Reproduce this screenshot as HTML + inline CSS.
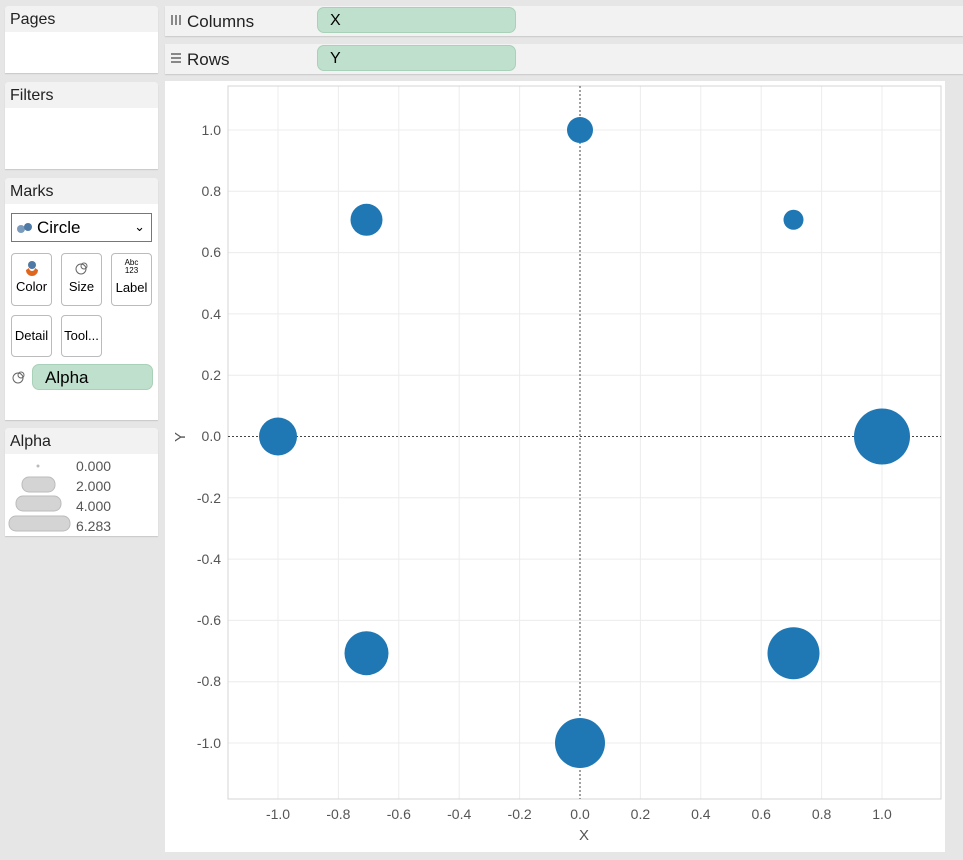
<!DOCTYPE html>
<html><head><meta charset="utf-8"><style>
body{margin:0;width:963px;height:860px;background:#e6e6e6;font-family:"Liberation Sans",sans-serif;position:relative;overflow:hidden}
.card{position:absolute;left:5px;width:153px;background:#fff;border-radius:4px 4px 0 0;box-shadow:0 1px 1px #c8c8c8}
.card .h{background:#f2f2f2;height:26px;font-size:16px;line-height:28px;padding-left:5px;color:#222;border-radius:4px 4px 0 0}
.shelf{position:absolute;left:165px;width:798px;height:30px;background:#f2f2f2;box-shadow:0 1px 1px #c8c8c8}
.shelf span{position:absolute;left:22px;top:6px;font-size:17px;color:#222}
.pill{position:absolute;left:152px;top:1px;width:199px;height:26px;background:#bfe0cc;border:1px solid #a9d0b8;border-radius:7px;font-size:16px;line-height:26px;padding-left:12px;box-sizing:border-box}
.btn{position:absolute;width:41px;height:53px;border:1px solid #bbb;border-radius:4px;font-size:13px;text-align:center;box-sizing:border-box;background:#fff}
</style></head><body>
<div class="card" style="top:6px;height:67px"><div class="h">Pages</div></div>
<div class="card" style="top:82px;height:87px"><div class="h">Filters</div></div>
<div class="card" style="top:178px;height:242px"><div class="h">Marks</div>
<div style="position:absolute;left:6px;top:35px;width:141px;height:29px;border:1px solid #777;box-sizing:border-box;font-size:17px;line-height:27px;padding-left:25px">Circle
<svg style="position:absolute;left:4px;top:8px" width="18" height="12"><circle cx="5" cy="7" r="4" fill="#7b9bbd"/><circle cx="12" cy="5" r="4" fill="#4f7aa5"/></svg>
<span style="position:absolute;right:6px;top:-1px;font-size:13px">&#8964;</span></div>
<div class="btn" style="left:6px;top:75px"><svg width="20" height="20" style="margin-top:4px"><circle cx="10" cy="7" r="4" fill="#4f7aa5"/><path d="M4 12a4 4 0 0 0 12 0l-3-2a3 3 0 0 1-6 0z" fill="#e0661e"/></svg><div style="margin-top:-2px">Color</div></div>
<div class="btn" style="left:56px;top:75px"><svg width="20" height="20" style="margin-top:4px"><circle cx="9" cy="11" r="5" fill="none" stroke="#666"/><circle cx="12" cy="8" r="3" fill="none" stroke="#666"/></svg><div style="margin-top:-2px">Size</div></div>
<div class="btn" style="left:106px;top:75px"><div style="font-size:8px;line-height:8px;margin-top:5px">Abc<br>123</div><div style="margin-top:5px">Label</div></div>
<div class="btn" style="left:6px;top:137px;height:42px;line-height:40px">Detail</div>
<div class="btn" style="left:56px;top:137px;height:42px;line-height:40px">Tool...</div>
<svg style="position:absolute;left:6px;top:191px" width="16" height="16"><circle cx="7" cy="9" r="5" fill="none" stroke="#666"/><circle cx="10" cy="6" r="3" fill="none" stroke="#666"/></svg>
<div class="pill" style="left:27px;top:186px;width:121px;font-size:17px">Alpha</div>
</div>
<div class="card" style="top:428px;height:108px"><div class="h">Alpha</div>
<svg style="position:absolute;left:0;top:28px" width="153" height="80">
<circle cx="33" cy="10" r="1.5" fill="#bbb"/>
<rect x="17" y="21" width="33" height="15" rx="7" fill="#d4d4d4" stroke="#bbb"/>
<rect x="11" y="40" width="45" height="15" rx="7" fill="#d4d4d4" stroke="#bbb"/>
<rect x="4" y="60" width="61" height="15" rx="7" fill="#d4d4d4" stroke="#bbb"/>
<g font-size="14" fill="#555" font-family="Liberation Sans"><text x="71" y="15">0.000</text><text x="71" y="35">2.000</text><text x="71" y="55">4.000</text><text x="71" y="75">6.283</text></g>
</svg></div>
<div class="shelf" style="top:6px"><svg style="position:absolute;left:6px;top:9px" width="12" height="11" fill="#888"><rect x="0" y="0" width="2" height="10"/><rect x="4" y="0" width="2" height="10"/><rect x="8" y="0" width="2" height="10"/></svg><span>Columns</span><div class="pill">X</div></div>
<div class="shelf" style="top:44px"><svg style="position:absolute;left:6px;top:9px" width="12" height="11" fill="#888"><rect x="0" y="0" width="10" height="2"/><rect x="0" y="4" width="10" height="2"/><rect x="0" y="8" width="10" height="2"/></svg><span>Rows</span><div class="pill">Y</div></div>
<svg style="position:absolute;left:165px;top:81px" width="780" height="771">
<rect width="780" height="771" fill="#fff"/>
<g transform="translate(-165,-81)" font-family="Liberation Sans" font-size="14" fill="#555">
<g stroke="#ececec">
<line x1="278" y1="86" x2="278" y2="799"/><line x1="338.4" y1="86" x2="338.4" y2="799"/><line x1="398.8" y1="86" x2="398.8" y2="799"/><line x1="459.2" y1="86" x2="459.2" y2="799"/><line x1="519.6" y1="86" x2="519.6" y2="799"/><line x1="640.4" y1="86" x2="640.4" y2="799"/><line x1="700.8" y1="86" x2="700.8" y2="799"/><line x1="761.2" y1="86" x2="761.2" y2="799"/><line x1="821.6" y1="86" x2="821.6" y2="799"/><line x1="882" y1="86" x2="882" y2="799"/>
<line x1="228" y1="130" x2="941" y2="130"/><line x1="228" y1="191.3" x2="941" y2="191.3"/><line x1="228" y1="252.6" x2="941" y2="252.6"/><line x1="228" y1="313.9" x2="941" y2="313.9"/><line x1="228" y1="375.2" x2="941" y2="375.2"/><line x1="228" y1="497.8" x2="941" y2="497.8"/><line x1="228" y1="559.1" x2="941" y2="559.1"/><line x1="228" y1="620.4" x2="941" y2="620.4"/><line x1="228" y1="681.7" x2="941" y2="681.7"/><line x1="228" y1="743" x2="941" y2="743"/>
</g>
<rect x="228" y="86" width="713" height="713" fill="none" stroke="#d4d4d4"/>
<line x1="580" y1="86" x2="580" y2="799" stroke="#444" stroke-dasharray="2,2"/>
<line x1="228" y1="436.5" x2="941" y2="436.5" stroke="#444" stroke-dasharray="2,2"/>
<g fill="#1f77b4">
<circle cx="580" cy="130" r="13"/><circle cx="366.5" cy="219.8" r="16"/><circle cx="793.5" cy="219.8" r="10"/>
<circle cx="278" cy="436.5" r="19"/><circle cx="882" cy="436.5" r="28"/>
<circle cx="366.5" cy="653.2" r="22"/><circle cx="580" cy="743" r="25"/><circle cx="793.5" cy="653.2" r="26"/>
</g>
<g text-anchor="end">
<text x="221" y="135">1.0</text><text x="221" y="196">0.8</text><text x="221" y="257">0.6</text><text x="221" y="319">0.4</text><text x="221" y="380">0.2</text><text x="221" y="441">0.0</text><text x="221" y="503">-0.2</text><text x="221" y="564">-0.4</text><text x="221" y="625">-0.6</text><text x="221" y="686">-0.8</text><text x="221" y="748">-1.0</text>
</g>
<g text-anchor="middle">
<text x="278" y="819">-1.0</text><text x="338.4" y="819">-0.8</text><text x="398.8" y="819">-0.6</text><text x="459.2" y="819">-0.4</text><text x="519.6" y="819">-0.2</text><text x="580" y="819">0.0</text><text x="640.4" y="819">0.2</text><text x="700.8" y="819">0.4</text><text x="761.2" y="819">0.6</text><text x="821.6" y="819">0.8</text><text x="882" y="819">1.0</text>
<text x="584" y="840" font-size="15">X</text>
<text transform="translate(185,437) rotate(-90)" font-size="15">Y</text>
</g></g></svg>
</body></html>
